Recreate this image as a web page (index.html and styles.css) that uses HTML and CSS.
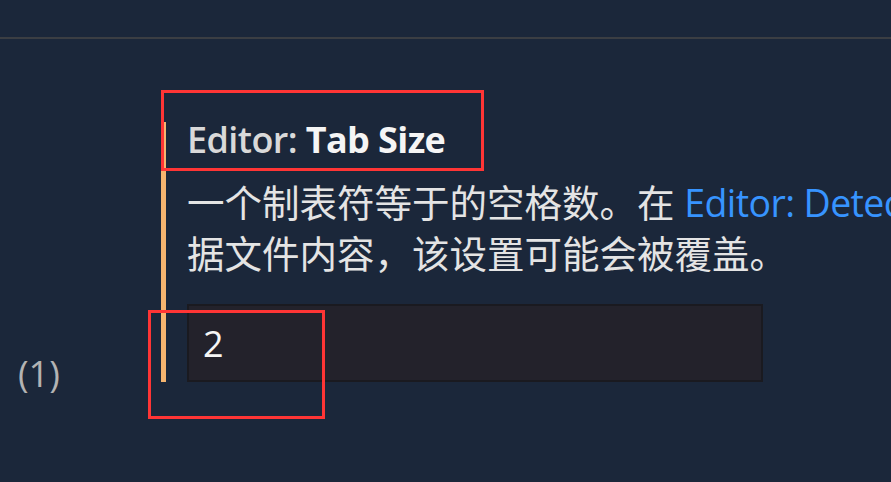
FILE: index.html
```html
<!DOCTYPE html>
<html lang="zh-CN">
<head>
    <meta charset="UTF-8">
    <meta name="viewport" content="width=device-width, initial-scale=1.0">
    <title>Settings - Editor: Tab Size</title>
    <link rel="stylesheet" href="styles.css">
</head>
<body>
    <div class="page">
        <div class="top-bar"></div>

        <div class="settings-list">
            <!-- Tab Size setting -->
            <div class="setting-row">
                <div class="setting-index">(1)</div>
                <div class="setting-item modified">
                    <div class="setting-title">
                        <span class="category">Editor: </span><span class="label">Tab Size</span>
                    </div>
                    <div class="setting-desc">
                        一个制表符等于的空格数。在 <a class="link" href="#">Editor: Detect Indentation</a> 启用时，根<br>据文件内容，该设置可能会被覆盖。
                    </div>
                    <input class="setting-input" type="number" value="2">
                </div>
            </div>

            <div class="setting-row next">
                <div class="setting-index"></div>
                <div class="setting-item">
                    <div class="setting-title">
                        <span class="category">Editor: </span><span class="label">Insert Spaces</span>
                    </div>
                </div>
            </div>
        </div>

        <!-- annotation boxes -->
        <div class="mark mark-title"></div>
        <div class="mark mark-indicator"></div>
    </div>
</body>
</html>
```

FILE: styles.css
```css
html, body {
    margin: 0;
    padding: 0;
    background: #1b273a;
    overflow: hidden;
}
body {
    font-family: "Open Sans", "Noto Sans CJK SC", sans-serif;
    color: #e2e2e2;
}
.page {
    position: relative;
    width: 891px;
    height: 482px;
    overflow: hidden;
}
.top-bar {
    height: 37px;
    border-bottom: 2px solid #3b3e43;
}
.settings-list {
    padding-top: 83px;
}
.setting-row {
    display: flex;
}
.setting-index {
    flex: 0 0 161px;
    box-sizing: border-box;
    padding-left: 18px;
    align-self: flex-end;
    margin-bottom: -10px;
    font-size: 36px;
    line-height: 36px;
    color: #b3b3b3;
}
.setting-item {
    flex: 1;
    min-width: 0;
    padding-left: 21px;
    border-left: 5px solid transparent;
}
.setting-item.modified {
    border-left-color: #f6b56f;
}
.setting-title {
    font-size: 36px;
    line-height: 36px;
    font-weight: 700;
    white-space: nowrap;
    letter-spacing: -0.6px;
}
.category {
    color: #d9d9d9;
    font-weight: 600;
}
.label {
    color: #f5f5f5;
}
.setting-desc {
    margin-top: 19px;
    font-size: 37.5px;
    line-height: 51px;
    white-space: nowrap;
    color: #e4e4e4;
}
.link {
    color: #3794ff;
    text-decoration: none;
    letter-spacing: -0.6px;
}
.setting-input {
    display: block;
    margin-top: 25px;
    width: 576px;
    height: 78px;
    box-sizing: border-box;
    padding: 0 14px;
    background: #23222b;
    border: 2px solid #1a1a20;
    color: #f5f5f5;
    font-family: "Open Sans", sans-serif;
    font-size: 36px;
    outline: none;
    -moz-appearance: textfield;
}
.setting-input::-webkit-inner-spin-button,
.setting-input::-webkit-outer-spin-button {
    -webkit-appearance: none;
    margin: 0;
}
.setting-row.next {
    margin-top: 100px;
}
.mark {
    position: absolute;
    border: 3px solid #ff3535;
    box-sizing: border-box;
}
.mark-title {
    left: 161px;
    top: 90px;
    width: 323px;
    height: 81px;
}
.mark-indicator {
    left: 148px;
    top: 310px;
    width: 177px;
    height: 109px;
}
```
